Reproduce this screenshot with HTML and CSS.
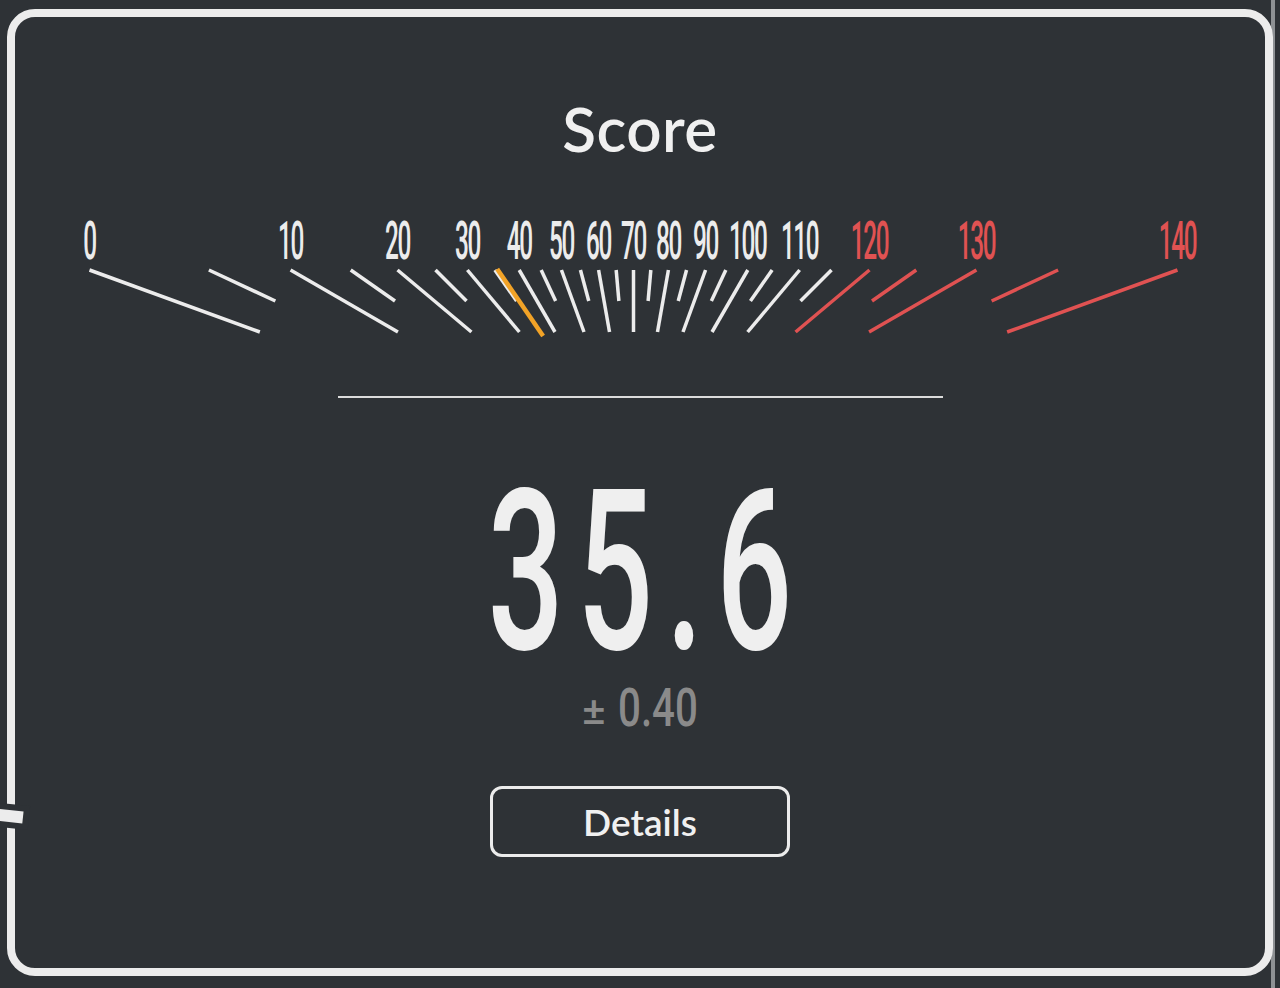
FILE: index.html
```html
<!DOCTYPE html>
<html lang="en">
<head>
<meta charset="utf-8">
<title>Score</title>
<link rel="stylesheet" href="styles.css">
</head>
<body>
<div class="edge-strip"></div>
<div class="frame">
  <h1 class="title">Score</h1>
  <svg class="gauge" width="1250" height="150" viewBox="15 200 1250 150" xmlns="http://www.w3.org/2000/svg">
    <g class="labels">
      <text class="lbl" transform="translate(89.5 259) scale(0.46 1)">0</text>
      <text class="lbl" transform="translate(290.5 259) scale(0.46 1)">10</text>
      <text class="lbl" transform="translate(397.5 259) scale(0.46 1)">20</text>
      <text class="lbl" transform="translate(467.4 259) scale(0.46 1)">30</text>
      <text class="lbl" transform="translate(519.2 259) scale(0.46 1)">40</text>
      <text class="lbl" transform="translate(561.4 259) scale(0.46 1)">50</text>
      <text class="lbl" transform="translate(598.6 259) scale(0.46 1)">60</text>
      <text class="lbl" transform="translate(633.5 259) scale(0.46 1)">70</text>
      <text class="lbl" transform="translate(668.4 259) scale(0.46 1)">80</text>
      <text class="lbl" transform="translate(705.6 259) scale(0.46 1)">90</text>
      <text class="lbl" transform="translate(747.8 259) scale(0.46 1)">100</text>
      <text class="lbl" transform="translate(799.6 259) scale(0.46 1)">110</text>
      <text class="lbl red" transform="translate(869.5 259) scale(0.46 1)">120</text>
      <text class="lbl red" transform="translate(976.5 259) scale(0.46 1)">130</text>
      <text class="lbl red" transform="translate(1177.5 259) scale(0.46 1)">140</text>
    </g>
    <g class="ticks">
      <line x1="89.5" y1="270" x2="259.84" y2="332"/>
      <line x1="290.55" y1="270" x2="397.94" y2="332"/>
      <line x1="397.53" y1="270" x2="471.42" y2="332"/>
      <line x1="467.36" y1="270" x2="519.38" y2="332"/>
      <line x1="519.18" y1="270" x2="554.98" y2="332"/>
      <line x1="561.43" y1="270" x2="584.0" y2="332"/>
      <line x1="598.59" y1="270" x2="609.52" y2="332"/>
      <line x1="633.5" y1="270" x2="633.5" y2="332"/>
      <line x1="668.41" y1="270" x2="657.48" y2="332"/>
      <line x1="705.57" y1="270" x2="683.0" y2="332"/>
      <line x1="747.82" y1="270" x2="712.02" y2="332"/>
      <line x1="799.64" y1="270" x2="747.62" y2="332"/>
      <line x1="208.89" y1="270" x2="275.37" y2="301"/>
      <line x1="350.73" y1="270" x2="395.0" y2="301"/>
      <line x1="435.5" y1="270" x2="466.5" y2="301"/>
      <line x1="494.86" y1="270" x2="516.56" y2="301"/>
      <line x1="541.17" y1="270" x2="555.63" y2="301"/>
      <line x1="580.45" y1="270" x2="588.75" y2="301"/>
      <line x1="616.18" y1="270" x2="618.89" y2="301"/>
      <line x1="650.82" y1="270" x2="648.11" y2="301"/>
      <line x1="686.55" y1="270" x2="678.25" y2="301"/>
      <line x1="725.83" y1="270" x2="711.37" y2="301"/>
      <line x1="772.14" y1="270" x2="750.44" y2="301"/>
      <line x1="831.5" y1="270" x2="800.5" y2="301"/>
    </g>
    <g class="ticks red">
      <line x1="869.47" y1="270" x2="795.58" y2="332"/>
      <line x1="976.45" y1="270" x2="869.06" y2="332"/>
      <line x1="1177.5" y1="270" x2="1007.16" y2="332"/>
      <line x1="916.27" y1="270" x2="872.0" y2="301"/>
      <line x1="1058.11" y1="270" x2="991.63" y2="301"/>
    </g>
    <line class="needle" x1="497.2" y1="269" x2="543.1" y2="336"/>
  </svg>
  <div class="rule"></div>
  <div class="value"><span class="value-num">35.6</span></div>
  <div class="error"><span class="pm">±</span><span class="error-num">0.40</span></div>
  <button class="details-btn" type="button">Details</button>
</div>
<div class="edge-tab"></div>
</body>
</html>
```

FILE: styles.css
```css
html, body {
  margin: 0;
  padding: 0;
}
body {
  background: #2e3236;
  width: 1280px;
  height: 988px;
  overflow: hidden;
  position: relative;
  font-family: "Lato", "Noto Sans", sans-serif;
  color: #ececec;
}
.edge-strip {
  position: absolute;
  left: 1271px;
  top: 0;
  width: 4px;
  height: 988px;
  background: #8e9194;
  z-index: 0;
}
.frame {
  position: relative;
  z-index: 1;
  box-sizing: border-box;
  margin: 9px 7px 0 7px;
  height: 967px;
  border: 8px solid #ececec;
  border-radius: 28px;
  background: #2e3236;
  display: flex;
  flex-direction: column;
  align-items: center;
}
.title {
  margin: 80px 0 0 0;
  font-family: "Lato", "Noto Sans", sans-serif;
  font-weight: 600;
  font-size: 62px;
  line-height: 62px;
  color: #f0f0f0;
  letter-spacing: 0.5px;
}
.gauge {
  display: block;
  margin-top: 41px;
  flex: none;
}
.lbl {
  font-family: "Roboto", "Liberation Sans", sans-serif;
  font-weight: 500;
  font-size: 53px;
  letter-spacing: -3px;
  fill: #ececec;
  text-anchor: middle;
}
.lbl.red {
  fill: #e05252;
}
.ticks line {
  stroke: #ececec;
  stroke-width: 3.5;
}
.ticks.red line {
  stroke: #e05252;
}
.needle {
  stroke: #f2a327;
  stroke-width: 4.5;
}
.rule {
  width: 605px;
  height: 2px;
  background: #dcdcdc;
  margin-top: 46px;
  flex: none;
}
.value {
  margin-top: 84px;
  height: 180px;
  width: 600px;
  display: flex;
  justify-content: center;
}
.value-num {
  display: inline-block;
  font-family: "Roboto", "Liberation Sans", sans-serif;
  font-weight: 500;
  font-size: 225px;
  line-height: 180px;
  letter-spacing: 22px;
  padding-left: 22px;
  color: #efefef;
  transform: scaleX(0.595);
}
.error {
  margin-top: 19px;
  height: 54px;
  display: flex;
  align-items: baseline;
  justify-content: center;
  color: #8a8a8a;
  gap: 12px;
}
.pm {
  font-family: "Lato", sans-serif;
  font-size: 40px;
  line-height: 54px;
  font-weight: 700;
}
.error-num {
  display: inline-block;
  font-family: "Roboto", "Liberation Sans", sans-serif;
  font-weight: 500;
  font-size: 53px;
  line-height: 54px;
  transform: scaleX(0.76);
  transform-origin: left center;
  margin-right: -25px;
}
.details-btn {
  margin-top: 51px;
  box-sizing: border-box;
  width: 300px;
  height: 71px;
  border: 3px solid #ececec;
  border-radius: 12px;
  background: transparent;
  color: #f0f0f0;
  font-family: "Lato", "Noto Sans", sans-serif;
  font-weight: 600;
  font-size: 37px;
  display: flex;
  align-items: center;
  justify-content: center;
  padding: 0;
}
.edge-tab {
  position: absolute;
  left: -4px;
  top: 810px;
  width: 27px;
  height: 12px;
  background: #ececec;
  transform: rotate(6deg);
  box-shadow: 0 0 0 6px #2e3236;
  z-index: 2;
}
```
